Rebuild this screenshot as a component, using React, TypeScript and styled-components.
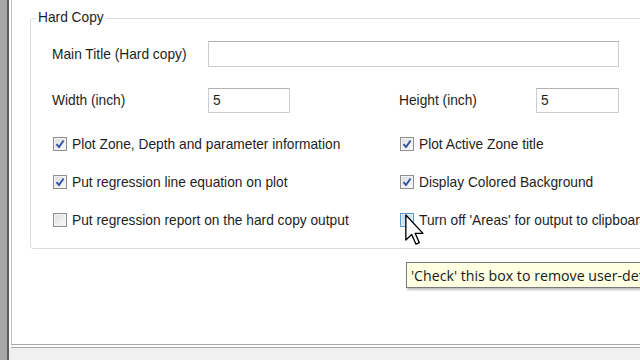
import styled, { createGlobalStyle } from 'styled-components'

const GlobalStyle = createGlobalStyle`
    html, body {
        margin: 0;
        padding: 0;
        background: #ffffff;
    }
    body {
        font-family: "Liberation Sans", Arial, sans-serif;
        font-size: 13.75px;
        color: #1e1e1e;
    }
`

const Screen = styled.div`
    position: relative;
    display: flex;
    width: 640px;
    height: 360px;
    overflow: hidden;
`

const Gutter = styled.div`
    flex: none;
    width: 7px;
    background: #a8a8a8;
    border-right: 2px solid #5c5c5c;
`

const Main = styled.div`
    flex: 1;
    min-width: 0;
    display: flex;
    flex-direction: column;
    background: #ffffff;
    padding-left: 2px;
`

const Page = styled.div`
    flex: 1;
    min-width: 0;
    border-left: 1px solid #c4c4c4;
    border-bottom: 4px double #a9a9a9;
`

const Footer = styled.div`
    flex: none;
    height: 12px;
    background: #f0f0f0;
    margin-left: -2px;
`

const Group = styled.div`
    position: relative;
    margin: 18px 0 0 18px;
    width: 700px;
    height: 231px;
    border: 1px solid #d6dee3;
    border-radius: 3px;
    padding: 22px 0 0 21px;
    box-sizing: border-box;
`

const Legend = styled.span`
    position: absolute;
    top: -9px;
    left: 5px;
    padding: 0 2px;
    background: #ffffff;
    line-height: 16px;
`

const Row = styled.div<{ $h: number }>`
    display: flex;
    align-items: center;
    height: ${p => p.$h}px;
`

const Label = styled.span<{ $w: number }>`
    width: ${p => p.$w}px;
    flex: none;
`

const Input = styled.div<{ $w: number; $h: number }>`
    width: ${p => p.$w}px;
    height: ${p => p.$h}px;
    box-sizing: border-box;
    border: 1px solid #cdcdcd;
    border-top-color: #b3b3b3;
    background: #ffffff;
    display: flex;
    align-items: center;
    padding-left: 4px;
    flex: none;
`

const Spacer = styled.div<{ $w: number }>`
    width: ${p => p.$w}px;
    flex: none;
`

const Checks = styled.div`
    margin-top: 12px;
    padding-left: 1px;
`

const CheckItem = styled.label<{ $w?: number }>`
    display: flex;
    align-items: center;
    gap: 5px;
    width: ${p => (p.$w ? `${p.$w}px` : 'auto')};
    flex: none;
    white-space: nowrap;
`

const Box = styled.span<{ $hover?: boolean }>`
    width: 14px;
    height: 14px;
    box-sizing: border-box;
    border: 1px solid ${p => (p.$hover ? '#5b9bd0' : '#8e8f8f')};
    background: ${p =>
        p.$hover
            ? 'linear-gradient(135deg, #b9ddf6, #dff0fc)'
            : 'linear-gradient(135deg, #dcdcdc, #fbfbfb)'};
    box-shadow: inset 0 0 0 1px ${p => (p.$hover ? '#def0fb' : '#f4f4f4')};
    display: flex;
    align-items: center;
    justify-content: center;
    flex: none;
`

const Tooltip = styled.div`
    position: absolute;
    left: 406px;
    top: 262px;
    height: 26px;
    padding: 0 6px 0 4px;
    box-sizing: border-box;
    background: #ffffe1;
    border: 1px solid #7a7a7a;
    box-shadow: 1px 2px 2px rgba(0, 0, 0, 0.25);
    display: flex;
    align-items: center;
    white-space: nowrap;
    font-family: "Open Sans", "Liberation Sans", sans-serif;
    font-size: 14.2px;
    color: #1a1a1a;
`

const Pointer = styled.svg`
    position: absolute;
    left: 405px;
    top: 214px;
`

function Check({ checked, hover }: { checked?: boolean; hover?: boolean }) {
    return (
        <Box $hover={hover}>
            {checked && (
                <svg width="10" height="10" viewBox="0 0 10 10">
                    <path d="M1.5 5.2 L4 8 L8.6 1.4" fill="none" stroke="#2c4fa3" strokeWidth="1.8" />
                </svg>
            )}
        </Box>
    )
}

function App() {
    return (
        <>
            <GlobalStyle />
            <Screen>
                <Gutter />
                <Main>
                    <Page>
                        <Group>
                            <Legend>Hard Copy</Legend>
                            <Row $h={26}>
                                <Label $w={156}>Main Title (Hard copy)</Label>
                                <Input $w={411} $h={26} />
                            </Row>
                            <Row $h={25} style={{ marginTop: 21 }}>
                                <Label $w={156}>Width (inch)</Label>
                                <Input $w={82} $h={25}>5</Input>
                                <Spacer $w={109} />
                                <Label $w={137}>Height (inch)</Label>
                                <Input $w={83} $h={25}>5</Input>
                            </Row>
                            <Checks>
                                <Row $h={38}>
                                    <CheckItem $w={347}>
                                        <Check checked />
                                        Plot Zone, Depth and parameter information
                                    </CheckItem>
                                    <CheckItem>
                                        <Check checked />
                                        Plot Active Zone title
                                    </CheckItem>
                                </Row>
                                <Row $h={38}>
                                    <CheckItem $w={347}>
                                        <Check checked />
                                        Put regression line equation on plot
                                    </CheckItem>
                                    <CheckItem>
                                        <Check checked />
                                        Display Colored Background
                                    </CheckItem>
                                </Row>
                                <Row $h={38}>
                                    <CheckItem $w={347}>
                                        <Check />
                                        Put regression report on the hard copy output
                                    </CheckItem>
                                    <CheckItem>
                                        <Check hover />
                                        Turn off 'Areas' for output to clipboard
                                    </CheckItem>
                                </Row>
                            </Checks>
                        </Group>
                    </Page>
                    <Footer />
                </Main>
                <Tooltip>'Check' this box to remove user-defined areas</Tooltip>
                <Pointer width="20" height="32" viewBox="0 0 12 19">
                    <path
                        d="M0.5 0.5 L0.5 15.5 L4 12.2 L6.6 18 L8.6 17.1 L6.1 11.5 L10.8 11.5 Z"
                        fill="#ffffff"
                        stroke="#000000"
                        strokeWidth="0.8"
                        strokeLinejoin="round"
                    />
                </Pointer>
            </Screen>
        </>
    )
}

export default App
